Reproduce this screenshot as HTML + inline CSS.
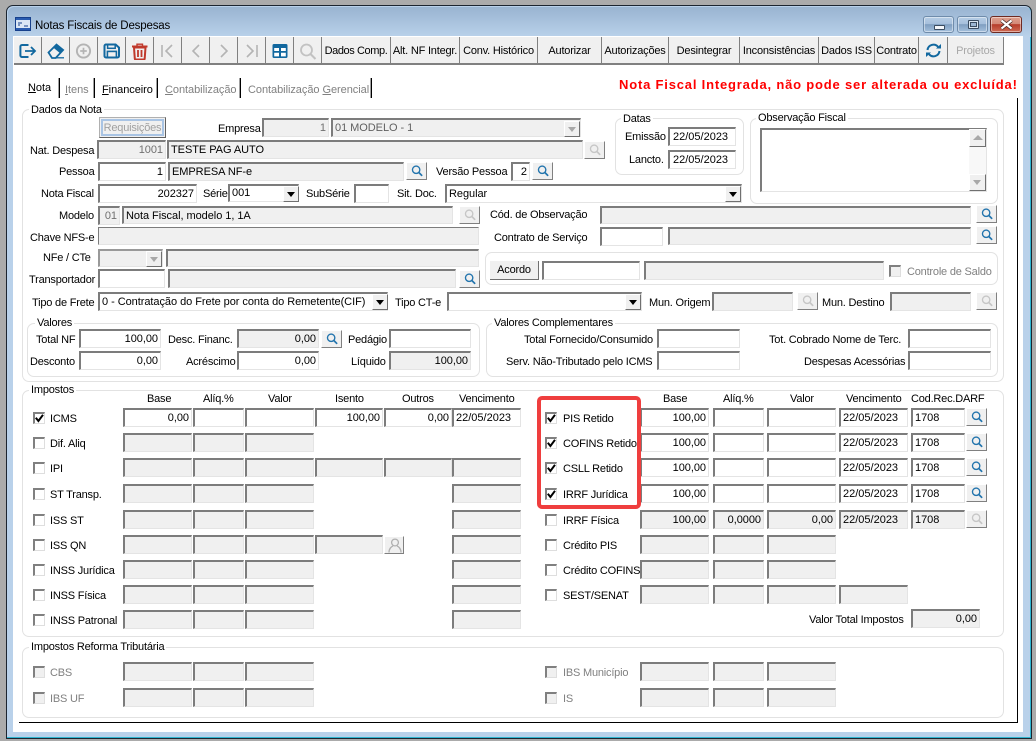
<!DOCTYPE html>
<html lang="pt"><head><meta charset="utf-8"><title>Notas Fiscais de Despesas</title>
<style>
html,body{margin:0;padding:0;width:1036px;height:741px;overflow:hidden;background:#ababab}
body{position:relative;font:11px/16px "Liberation Sans",sans-serif;color:#000;letter-spacing:-.2px}
div,span,svg{position:absolute;box-sizing:border-box}
u{text-decoration:underline}
#win{left:6px;top:5px;width:1026px;height:734px;border:1px solid #1c2530;border-radius:7px 7px 0 0;background:#b9d1ea;box-shadow:inset -1px -1px 0 #2fb5d0}
#ttl{left:1px;top:1px;width:1023px;height:30px;border-radius:6px 6px 0 0;background:linear-gradient(#99b4d1,#b9d1ea)}
#cl{left:13px;top:36px;width:1010px;height:696px;background:#fff}
.b{top:37px;height:28px;background:#f0f0f0;border-right:1px solid #808080;border-bottom:2px solid #808080;text-align:center;line-height:29px;white-space:nowrap}
.b svg{left:5px;top:6px}
.l,.t{white-space:nowrap}
.l{height:16px;line-height:18px}
.tab{letter-spacing:-.05px}
.g{color:#808080}
.sep{top:78px;width:2px;height:20px;border-right:1px solid #000;border-left:1px solid #a0a0a0}
.box{border:1px solid #e2e2e2;border-radius:7px}
.lg{background:#fff;padding:0 2px;white-space:nowrap;height:14px;line-height:16px}
.f{background:#fff;border:1px solid #e4e4e4;border-top:2px solid #7c7c7c;border-left:2px solid #7c7c7c;padding:0 2px;height:19px;line-height:17px;white-space:nowrap;overflow:hidden;letter-spacing:-.05px}
.d{background:#f0f0f0}
.r{text-align:right}
.dt{letter-spacing:0}
.s{background:#f0f0f0;border:1px solid #fff;border-right:1px solid #808080;border-bottom:1px solid #808080;width:21px;height:18px}
.s svg{left:4px;top:2px;width:12px;height:12px;color:#2274ad}
.s.x svg{color:#c6c6c6}
.a{background:#f0f0f0;border:1px solid #fff;border-right:1px solid #707070;border-bottom:1px solid #707070;width:16px;height:16px}
.a:after{content:"";position:absolute;left:3px;top:5px;border-left:4px solid transparent;border-right:4px solid transparent;border-top:5px solid #000}
.a.x:after{border-top-color:#a8a8a8}
.ck{width:12px;height:12px;background:#fff;border:1px solid #dedede;border-top:2px solid #808080;border-left:2px solid #808080}
.ck.dis{background:#f0f0f0}
.ck svg{left:-1px;top:-1px;width:11px;height:11px}
.row{left:0;width:1036px;height:19px}
.c1{left:123px;width:69px}.c2{left:193px;width:51px}.c3{left:245px;width:69px}.c4{left:315px;width:68px}.c5{left:384px;width:68px}.c6{left:452px;width:69px;letter-spacing:0}
.e1{left:640px;width:69px}.e2{left:713px;width:51px}.e3{left:767px;width:69px}.e4{left:839px;width:69px;letter-spacing:0}.e5{left:911px;width:54px}.e6{left:966px}
.rb{border:4px solid #ef3e3e;border-radius:5px}
.tb{top:16px;height:17px;width:31px;border:1px solid #6f8cab;border-radius:3px;box-shadow:inset 0 0 0 1px rgba(255,255,255,.45);background:linear-gradient(#b6cde5 0,#a6c0dc 45%,#7f9ec0 50%,#a4c0dd 100%)}
</style></head><body>
<svg width="0" height="0" style="left:0;top:0"><defs><symbol id="q" viewBox="0 0 14 14"><circle cx="6" cy="5.6" r="4.3" fill="none" stroke="currentColor" stroke-width="1.6"/><path d="M9 8.6 13 12.6" stroke="currentColor" stroke-width="2" fill="none"/></symbol>
<symbol id="cm" viewBox="0 0 11 11"><path d="M1.8 4.8 4.4 8 9 1.8" fill="none" stroke="#000" stroke-width="2"/></symbol></defs></svg>
<div id="win"><div id="ttl"></div></div>
<div id="cl"></div>

<svg style="left:15px;top:17px" width="16" height="14" viewBox="0 0 16 14"><rect x=".5" y=".5" width="15" height="13" fill="#dce7f5" stroke="#17408c"/><rect x="1" y="1" width="14" height="2" fill="#2a5cb0"/><path d="M3 6h4M3 8h2M9 9h4" stroke="#17408c" fill="none"/><rect x="1" y="11" width="14" height="2" fill="#2a5cb0"/></svg>
<div class="t" style="left:35px;top:18px;font-size:11.5px;letter-spacing:-.17px">Notas Fiscais de Despesas</div>
<div class="tb" style="left:923px"><div style="left:10px;top:8px;width:11px;height:5px;background:#f4f7fb;border:1px solid #3b4c60;border-radius:1px"></div></div>
<div class="tb" style="left:957px"><div style="left:10px;top:3px;width:11px;height:9px;border:1px solid #3b4c60;background:#dbe6f1;border-radius:1px"><div style="left:1px;top:1px;width:7px;height:5px;border:1px solid #3b4c60;background:#9db7d3"></div></div></div>
<div class="tb" style="left:990px;width:32px;border-color:#6e2a22;background:linear-gradient(#dfa08f 0,#d48a78 45%,#b63d2a 50%,#cf6b55 100%)"><svg style="left:8px;top:2px" width="15" height="11" viewBox="0 0 15 11"><path d="M2.5 1.5 12.5 9.5M12.5 1.5 2.5 9.5" stroke="#3b2420" stroke-width="3.6"/><path d="M2.5 1.5 12.5 9.5M12.5 1.5 2.5 9.5" stroke="#fff" stroke-width="2.2"/></svg></div>

<!-- toolbar -->
<div class="b" style="left:14px;width:28px"><svg width="18" height="16" viewBox="0 0 18 16" style="left:5px;top:6px"><path d="M9.5 2H3a1.6 1.6 0 0 0-1.6 1.6v8.8A1.6 1.6 0 0 0 3 14h6.5" fill="none" stroke="#12689f" stroke-width="2"/><path d="M6 8h10M12 4l4 4-4 4" fill="none" stroke="#12689f" stroke-width="1.8"/></svg></div>
<div class="b" style="left:42px;width:28px"><svg width="18" height="16" viewBox="0 0 18 16"><path d="M1.5 9.5 9.5 1.6l6.6 5.4-7.4 8H5z" fill="none" stroke="#12689f" stroke-width="1.8"/><path d="M9.5 1.6l6.6 5.4-3 3.2-6.6-5.4z" fill="#12689f"/><path d="M9 14.8h8" stroke="#12689f" stroke-width="1.3"/></svg></div>
<div class="b" style="left:70px;width:28px"><svg width="18" height="16" viewBox="0 0 18 16"><circle cx="8.5" cy="8" r="6.6" fill="none" stroke="#b4b4b4" stroke-width="1.9"/><path d="M8.5 4.7v6.6M5.2 8h6.6" stroke="#b4b4b4" stroke-width="1.7"/></svg></div>
<div class="b" style="left:98px;width:28px"><svg width="18" height="16" viewBox="0 0 18 16"><path d="M1.5 3a1.5 1.5 0 0 1 1.5-1.5h9.6L16 4.6V13a1.5 1.5 0 0 1-1.5 1.5H3A1.5 1.5 0 0 1 1.5 13z" fill="none" stroke="#12689f" stroke-width="2"/><rect x="4.6" y="1.5" width="7.6" height="3.8" fill="none" stroke="#12689f" stroke-width="1.5"/><rect x="4.4" y="8.4" width="9" height="6" fill="none" stroke="#12689f" stroke-width="1.6"/></svg></div>
<div class="b" style="left:126px;width:28px"><svg width="18" height="17" viewBox="0 0 18 17"><path d="M1 3.5h15.5" stroke="#c0392b" stroke-width="2"/><path d="M6 3V1.2h5.5V3" fill="none" stroke="#c0392b" stroke-width="1.4"/><path d="M3 4.5h11.5l-.8 11a1 1 0 0 1-1 1H4.8a1 1 0 0 1-1-1z" fill="none" stroke="#c0392b" stroke-width="2"/><path d="M7 7v7M10.500 7v7" stroke="#c0392b" stroke-width="1.8"/></svg></div>
<div class="b" style="left:154px;width:28px"><svg width="18" height="16" viewBox="0 0 18 16"><path d="M3 2v12" stroke="#b4b4b4" stroke-width="1.6"/><path d="M13 2 7 8l6 6" fill="none" stroke="#b4b4b4" stroke-width="1.6"/></svg></div>
<div class="b" style="left:182px;width:28px"><svg width="18" height="16" viewBox="0 0 18 16"><path d="M12 2 6 8l6 6" fill="none" stroke="#b4b4b4" stroke-width="1.6"/></svg></div>
<div class="b" style="left:210px;width:28px"><svg width="18" height="16" viewBox="0 0 18 16"><path d="M6 2l6 6-6 6" fill="none" stroke="#b4b4b4" stroke-width="1.6"/></svg></div>
<div class="b" style="left:238px;width:28px"><svg width="18" height="16" viewBox="0 0 18 16"><path d="M4 2l6 6-6 6" fill="none" stroke="#b4b4b4" stroke-width="1.6"/><path d="M14 2v12" stroke="#b4b4b4" stroke-width="1.6"/></svg></div>
<div class="b" style="left:266px;width:28px"><svg width="18" height="16" viewBox="0 0 18 16"><rect x="1.500" y="1" width="15" height="14" rx="1.500" fill="#12689f"/><path d="M3.200 5h4.800v3H3.200zM10 5h4.800v3H10zM3.200 9.800h4.800v3.600H3.200zM10 9.800h4.800v3.600H10z" fill="#fff"/></svg></div>
<div class="b" style="left:294px;width:28px"><svg width="18" height="17" viewBox="0 0 18 17"><circle cx="7.500" cy="7" r="5.500" fill="none" stroke="#c2c2c2" stroke-width="1.800"/><path d="M11.500 11 16.500 16" stroke="#c2c2c2" stroke-width="2"/></svg></div>
<div class="b" style="left:322px;width:69px;letter-spacing:-.4px">Dados Comp.</div>
<div class="b" style="left:391px;width:69px">Alt. NF Integr.</div>
<div class="b" style="left:460px;width:78px">Conv. Histórico</div>
<div class="b" style="left:538px;width:64px">Autorizar</div>
<div class="b" style="left:602px;width:67px">Autorizações</div>
<div class="b" style="left:669px;width:71px">Desintegrar</div>
<div class="b" style="left:740px;width:79px">Inconsistências</div>
<div class="b" style="left:819px;width:56px">Dados ISS</div>
<div class="b" style="left:875px;width:44px">Contrato</div>
<div class="b" style="left:919px;width:29px"><svg width="17" height="15" viewBox="0 0 17 15" style="left:6px;top:6px"><path d="M2.500 7A6 6 0 0 1 13 3.800" fill="none" stroke="#12689f" stroke-width="2"/><path d="M14.500 8A6 6 0 0 1 4 11.200" fill="none" stroke="#12689f" stroke-width="2"/><path d="M11 5.500h5V1zM6 9.500H1V14z" fill="#12689f"/></svg></div>
<div class="b g" style="left:948px;width:56px;color:#a8a8a8">Projetos</div>

<!-- tabs -->
<div class="l tab" style="left:28px;top:79px"><u>N</u>ota</div>
<div class="sep" style="left:58px"></div>
<div class="l tab g" style="left:65px;top:81px"><u>I</u>tens</div>
<div class="sep" style="left:93px"></div>
<div class="l tab" style="left:102px;top:81px"><u>F</u>inanceiro</div>
<div class="sep" style="left:156px"></div>
<div class="l tab g" style="left:165px;top:81px"><u>C</u>ontabilização</div>
<div class="sep" style="left:239px"></div>
<div class="l tab g" style="left:248px;top:81px">Contabilização <u>G</u>erencial</div>
<div class="sep" style="left:370px"></div>
<div class="t" style="left:619px;top:77px;color:#f00;font-weight:bold;font-size:13px;letter-spacing:.81px">Nota Fiscal Integrada, não pode ser alterada ou excluída!</div>

<div style="left:1017px;top:98px;width:1px;height:625px;background:#000"></div>
<div style="left:19px;top:722px;width:999px;height:1px;background:#000"></div>

<!-- Dados da Nota -->
<div class="box" style="left:22px;top:109px;width:982px;height:273px"></div>
<div class="lg" style="left:29px;top:102px">Dados da Nota</div>

<div style="left:99px;top:117px;width:67px;height:21px;border:1px solid #b0b0b0;border-right-color:#606060;border-bottom-color:#606060;background:#f0f0f0"><div style="left:1px;top:1px;width:63px;height:17px;border:2px solid #a9c4e4;text-align:center;color:#a0a0a0;line-height:14px">Requisições</div></div>

<div class="l" style="left:218px;top:120px">Empresa</div>
<div class="f d r" style="left:262px;top:118px;width:67px;color:#707070">1</div>
<div class="f d" style="left:331px;top:118px;width:250px;color:#606060">01 MODELO - 1</div>
<div class="a x" style="left:564px;top:121px"></div>

<div class="l" style="left:30px;top:142px">Nat. Despesa</div>
<div class="f d r" style="left:97px;top:140px;width:69px;color:#707070">1001</div>
<div class="f d" style="left:167px;top:140px;width:416px">TESTE PAG AUTO</div>
<div class="s x" style="left:584px;top:141px"><svg><use href="#q"/></svg></div>

<div class="l" style="left:59px;top:163px">Pessoa</div>
<div class="f r" style="left:98px;top:162px;width:68px">1</div>
<div class="f d" style="left:168px;top:162px;width:236px">EMPRESA NF-e</div>
<div class="s" style="left:406px;top:162px"><svg><use href="#q"/></svg></div>
<div class="l" style="left:436px;top:163px">Versão Pessoa</div>
<div class="f r" style="left:511px;top:162px;width:19px">2</div>
<div class="s" style="left:532px;top:162px"><svg><use href="#q"/></svg></div>

<div class="box" style="left:615px;top:118px;width:129px;height:57px"></div>
<div class="lg" style="left:621px;top:111px">Datas</div>
<div class="l" style="left:625px;top:128px">Emissão</div>
<div class="f dt" style="left:668px;top:127px;width:68px;padding-left:3px">22/05/2023</div>
<div class="l" style="left:629px;top:151px">Lancto.</div>
<div class="f dt" style="left:668px;top:150px;width:68px;padding-left:3px">22/05/2023</div>

<div class="box" style="left:750px;top:118px;width:248px;height:86px"></div>
<div class="lg" style="left:756px;top:110px">Observação Fiscal</div>
<div class="f" style="left:760px;top:128px;width:227px;height:64px"></div>
<div style="left:969px;top:130px;width:17px;height:61px;background:#f8f8f8"></div>
<div class="a x" style="left:969px;top:129px;width:17px;height:18px"></div><div style="left:973px;top:135px;border-left:5px solid transparent;border-right:5px solid transparent;border-bottom:5px solid #a8a8a8;background:#f0f0f0"></div>
<div class="a x" style="left:969px;top:174px;width:17px;height:17px"></div>

<div class="l" style="left:41px;top:185px">Nota Fiscal</div>
<div class="f r" style="left:98px;top:184px;width:99px">202327</div>
<div class="l" style="left:203px;top:185px">Série</div>
<div class="f" style="left:228px;top:184px;width:71px;height:18px;line-height:14px">001</div>
<div class="a" style="left:283px;top:186px"></div>
<div class="l" style="left:306px;top:185px">SubSérie</div>
<div class="f" style="left:354px;top:184px;width:35px"></div>
<div class="l" style="left:397px;top:185px">Sit. Doc.</div>
<div class="f" style="left:445px;top:184px;width:297px;height:19px">Regular</div>
<div class="a" style="left:725px;top:186px"></div>

<div class="l" style="left:59px;top:207px">Modelo</div>
<div class="f d r" style="left:98px;top:206px;width:22px;color:#707070">01</div>
<div class="f d" style="left:122px;top:206px;width:331px;height:18px">Nota Fiscal, modelo 1, 1A</div>
<div class="s x" style="left:459px;top:206px"><svg><use href="#q"/></svg></div>

<div class="l" style="left:30px;top:229px">Chave NFS-e</div>
<div class="f d" style="left:98px;top:227px;width:381px;height:18px;border-top-width:1px;border-left-width:1px"></div>

<div class="l" style="left:43px;top:249px">NFe / CTe</div>
<div class="f d" style="left:98px;top:249px;width:65px;height:18px;border-top-color:#999;border-left-color:#999"></div>
<div class="a x" style="left:146px;top:251px"></div>
<div class="f d" style="left:166px;top:249px;width:313px;height:18px"></div>

<div class="l" style="left:29px;top:271px">Transportador</div>
<div class="f" style="left:98px;top:269px;width:67px"></div>
<div class="f d" style="left:168px;top:269px;width:288px"></div>
<div class="s" style="left:459px;top:270px"><svg><use href="#q"/></svg></div>

<div class="l" style="left:32px;top:294px">Tipo de Frete</div>
<div class="f" style="left:98px;top:292px;width:290px">0 - Contratação do Frete por conta do Remetente(CIF)</div>
<div class="a" style="left:372px;top:294px"></div>
<div class="l" style="left:395px;top:294px">Tipo CT-e</div>
<div class="f" style="left:447px;top:292px;width:195px"></div>
<div class="a" style="left:625px;top:294px"></div>

<div class="l" style="left:490px;top:206px">Cód. de Observação</div>
<div class="f d" style="left:600px;top:206px;width:371px;height:18px"></div>
<div class="s" style="left:976px;top:205px"><svg><use href="#q"/></svg></div>
<div class="l" style="left:494px;top:229px">Contrato de Serviço</div>
<div class="f" style="left:600px;top:227px;width:63px"></div>
<div class="f d" style="left:668px;top:227px;width:303px;height:18px"></div>
<div class="s" style="left:976px;top:226px"><svg><use href="#q"/></svg></div>

<div class="box" style="left:485px;top:252px;width:513px;height:33px"></div>
<div style="left:490px;top:261px;width:49px;height:19px;background:#f0f0f0;border-right:1px solid #707070;border-bottom:1px solid #707070;text-align:center;line-height:18px">Acordo</div>
<div class="f" style="left:542px;top:261px;width:98px"></div>
<div class="f d" style="left:644px;top:261px;width:240px"></div>
<div class="ck dis" style="left:889px;top:265px"></div>
<div class="l g" style="left:907px;top:263px">Controle de Saldo</div>

<div class="l" style="left:649px;top:294px">Mun. Origem</div>
<div class="f d" style="left:712px;top:292px;width:81px"></div>
<div class="s x" style="left:797px;top:292px"><svg><use href="#q"/></svg></div>
<div class="l" style="left:822px;top:294px">Mun. Destino</div>
<div class="f d" style="left:890px;top:292px;width:81px"></div>
<div class="s x" style="left:976px;top:292px"><svg><use href="#q"/></svg></div>

<!-- Valores -->
<div class="box" style="left:27px;top:323px;width:453px;height:54px"></div>
<div class="lg" style="left:35px;top:315px">Valores</div>
<div class="l" style="left:36px;top:331px">Total NF</div>
<div class="f r" style="left:79px;top:329px;width:82px">100,00</div>
<div class="l" style="left:168px;top:331px">Desc. Financ.</div>
<div class="f d r" style="left:237px;top:329px;width:82px">0,00</div>
<div class="s" style="left:321px;top:330px"><svg><use href="#q"/></svg></div>
<div class="l" style="left:348px;top:331px">Pedágio</div>
<div class="f" style="left:389px;top:329px;width:82px"></div>
<div class="l" style="left:30px;top:353px">Desconto</div>
<div class="f r" style="left:79px;top:351px;width:82px">0,00</div>
<div class="l" style="left:186px;top:353px">Acréscimo</div>
<div class="f r" style="left:237px;top:351px;width:82px">0,00</div>
<div class="l" style="left:351px;top:353px">Líquido</div>
<div class="f d r" style="left:389px;top:351px;width:82px">100,00</div>

<div class="box" style="left:486px;top:323px;width:512px;height:54px"></div>
<div class="lg" style="left:492px;top:315px">Valores Complementares</div>
<div class="l" style="left:524px;top:331px">Total Fornecido/Consumido</div>
<div class="f" style="left:657px;top:329px;width:83px"></div>
<div class="l" style="left:506px;top:353px">Serv. Não-Tributado pelo ICMS</div>
<div class="f" style="left:657px;top:351px;width:83px"></div>
<div class="l" style="left:769px;top:331px">Tot. Cobrado Nome de Terc.</div>
<div class="f" style="left:908px;top:329px;width:83px"></div>
<div class="l" style="left:804px;top:353px">Despesas Acessórias</div>
<div class="f" style="left:908px;top:351px;width:83px"></div>

<!-- Impostos -->
<div class="box" style="left:22px;top:390px;width:982px;height:247px"></div>
<div class="lg" style="left:29px;top:382px">Impostos</div>
<div class="l" style="left:147px;top:390px">Base</div>
<div class="l" style="left:203px;top:390px">Alíq.%</div>
<div class="l" style="left:268px;top:390px">Valor</div>
<div class="l" style="left:335px;top:390px">Isento</div>
<div class="l" style="left:402px;top:390px">Outros</div>
<div class="l" style="left:459px;top:390px">Vencimento</div>
<div class="l" style="left:663px;top:390px">Base</div>
<div class="l" style="left:723px;top:390px">Alíq.%</div>
<div class="l" style="left:790px;top:390px">Valor</div>
<div class="l" style="left:846px;top:390px">Vencimento</div>
<div class="l" style="left:911px;top:390px">Cod.Rec.DARF</div>

<div class="row" style="top:408px">
<div class="ck" style="left:33px;top:4px"><svg><use href="#cm"/></svg></div><div class="l" style="left:50px;top:2px">ICMS</div>
<div class="f r c1">0,00</div><div class="f c2"></div><div class="f c3"></div><div class="f r c4">100,00</div><div class="f r c5">0,00</div><div class="f c6">22/05/2023</div>
<div class="ck" style="left:545px;top:4px"><svg><use href="#cm"/></svg></div><div class="l" style="left:563px;top:2px">PIS Retido</div>
<div class="f r e1">100,00</div><div class="f e2"></div><div class="f e3"></div><div class="f e4">22/05/2023</div><div class="f e5">1708</div><div class="s e6"><svg><use href="#q"/></svg></div>
</div>
<div class="row" style="top:433px">
<div class="ck" style="left:33px;top:4px"></div><div class="l" style="left:50px;top:2px">Dif. Aliq</div>
<div class="f d c1"></div><div class="f d c2"></div><div class="f d c3"></div>
<div class="ck" style="left:545px;top:4px"><svg><use href="#cm"/></svg></div><div class="l" style="left:563px;top:2px">COFINS Retido</div>
<div class="f r e1">100,00</div><div class="f e2"></div><div class="f e3"></div><div class="f e4">22/05/2023</div><div class="f e5">1708</div><div class="s e6"><svg><use href="#q"/></svg></div>
</div>
<div class="row" style="top:458px">
<div class="ck" style="left:33px;top:4px"></div><div class="l" style="left:50px;top:2px">IPI</div>
<div class="f d c1"></div><div class="f d c2"></div><div class="f d c3"></div><div class="f d c4"></div><div class="f d c5"></div><div class="f d c6"></div>
<div class="ck" style="left:545px;top:4px"><svg><use href="#cm"/></svg></div><div class="l" style="left:563px;top:2px">CSLL Retido</div>
<div class="f r e1">100,00</div><div class="f e2"></div><div class="f e3"></div><div class="f e4">22/05/2023</div><div class="f e5">1708</div><div class="s e6"><svg><use href="#q"/></svg></div>
</div>
<div class="row" style="top:484px">
<div class="ck" style="left:33px;top:4px"></div><div class="l" style="left:50px;top:2px">ST Transp.</div>
<div class="f d c1"></div><div class="f d c2"></div><div class="f d c3"></div><div class="f d c6"></div>
<div class="ck" style="left:545px;top:4px"><svg><use href="#cm"/></svg></div><div class="l" style="left:563px;top:2px">IRRF Jurídica</div>
<div class="f r e1">100,00</div><div class="f e2"></div><div class="f e3"></div><div class="f e4">22/05/2023</div><div class="f e5">1708</div><div class="s e6"><svg><use href="#q"/></svg></div>
</div>
<div class="row" style="top:510px">
<div class="ck" style="left:33px;top:4px"></div><div class="l" style="left:50px;top:2px">ISS ST</div>
<div class="f d c1"></div><div class="f d c2"></div><div class="f d c3"></div><div class="f d c6"></div>
<div class="ck" style="left:545px;top:4px"></div><div class="l" style="left:563px;top:2px">IRRF Física</div>
<div class="f d r e1">100,00</div><div class="f d r e2">0,0000</div><div class="f d r e3">0,00</div><div class="f d e4">22/05/2023</div><div class="f d e5">1708</div><div class="s x e6"><svg><use href="#q"/></svg></div>
</div>
<div class="row" style="top:535px">
<div class="ck" style="left:33px;top:4px"></div><div class="l" style="left:50px;top:2px">ISS QN</div>
<div class="f d c1"></div><div class="f d c2"></div><div class="f d c3"></div><div class="f d c4"></div>
<div class="s x" style="left:384px;top:1px;width:20px"><svg style="left:3px;top:1px;width:14px;height:15px" viewBox="0 0 14 15"><circle cx="7" cy="4.500" r="3.400" fill="none" stroke="#b0b0b0" stroke-width="1.300"/><path d="M1 14.500c0-4 2.500-6 4-6.500M13 14.500c0-4-2.500-6-4-6.500" fill="none" stroke="#b0b0b0" stroke-width="1.300"/></svg></div>
<div class="f d c6"></div>
<div class="ck" style="left:545px;top:4px"></div><div class="l" style="left:563px;top:2px">Crédito PIS</div>
<div class="f d e1"></div><div class="f d e2"></div><div class="f d e3"></div>
</div>
<div class="row" style="top:560px">
<div class="ck" style="left:33px;top:4px"></div><div class="l" style="left:50px;top:2px">INSS Jurídica</div>
<div class="f d c1"></div><div class="f d c2"></div><div class="f d c3"></div><div class="f d c6"></div>
<div class="ck" style="left:545px;top:4px"></div><div class="l" style="left:563px;top:2px">Crédito COFINS</div>
<div class="f d e1"></div><div class="f d e2"></div><div class="f d e3"></div>
</div>
<div class="row" style="top:585px">
<div class="ck" style="left:33px;top:4px"></div><div class="l" style="left:50px;top:2px">INSS Física</div>
<div class="f d c1"></div><div class="f d c2"></div><div class="f d c3"></div><div class="f d c6"></div>
<div class="ck" style="left:545px;top:4px"></div><div class="l" style="left:563px;top:2px">SEST/SENAT</div>
<div class="f d e1"></div><div class="f d e2"></div><div class="f d e3"></div><div class="f d e4"></div>
</div>
<div class="row" style="top:610px">
<div class="ck" style="left:33px;top:4px"></div><div class="l" style="left:50px;top:2px">INSS Patronal</div>
<div class="f d c1"></div><div class="f d c2"></div><div class="f d c3"></div><div class="f d c6"></div>
<div class="l" style="left:809px;top:1px">Valor Total Impostos</div>
<div class="f d r" style="left:911px;top:-1px;width:69px">0,00</div>
</div>

<div class="rb" style="left:537px;top:396px;width:104px;height:113px"></div>

<!-- Reforma -->
<div class="box" style="left:22px;top:647px;width:982px;height:71px"></div>
<div class="lg" style="left:29px;top:639px">Impostos Reforma Tributária</div>
<div class="row" style="top:662px">
<div class="ck dis" style="left:33px;top:4px"></div><div class="l g" style="left:50px;top:2px">CBS</div>
<div class="f d c1"></div><div class="f d c2"></div><div class="f d c3"></div>
<div class="ck dis" style="left:545px;top:4px"></div><div class="l g" style="left:563px;top:2px">IBS Município</div>
<div class="f d e1"></div><div class="f d e2"></div><div class="f d e3"></div>
</div>
<div class="row" style="top:688px">
<div class="ck dis" style="left:33px;top:4px"></div><div class="l g" style="left:50px;top:2px">IBS UF</div>
<div class="f d c1"></div><div class="f d c2"></div><div class="f d c3"></div>
<div class="ck dis" style="left:545px;top:4px"></div><div class="l g" style="left:563px;top:2px">IS</div>
<div class="f d e1"></div><div class="f d e2"></div><div class="f d e3"></div>
</div>
</body></html>
